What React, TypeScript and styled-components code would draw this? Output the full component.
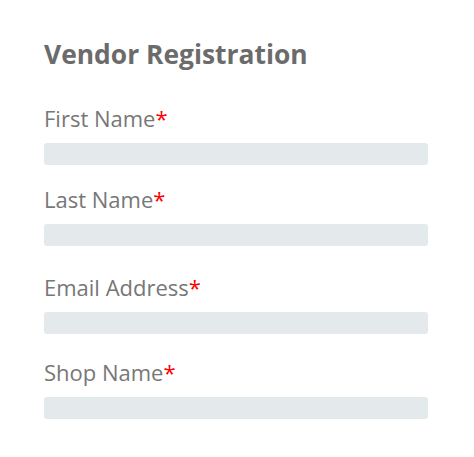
import React from "react";
import styled, { createGlobalStyle } from "styled-components";

const GlobalStyle = createGlobalStyle`
  html, body {
    margin: 0;
    padding: 0;
    background: #ffffff;
  }
  body {
    font-family: "Open Sans", "Liberation Sans", sans-serif;
  }
`;

const Form = styled.form`
  display: flex;
  flex-direction: column;
  width: 384px;
  padding: 39px 0 0 44px;
`;

const Title = styled.h2`
  margin: 0 0 34px;
  font-size: 26.4px;
  line-height: 31px;
  font-weight: 700;
  color: #6b6b6b;
`;

const Field = styled.div<{ $gap: number }>`
  display: flex;
  flex-direction: column;
  margin-top: ${(p) => p.$gap}px;
`;

const Label = styled.label`
  font-size: 22px;
  line-height: 28px;
  font-weight: 400;
  color: #777777;
  margin-bottom: 11px;
`;

const Required = styled.span`
  color: #ff0000;
`;

const Input = styled.input`
  height: 22px;
  box-sizing: border-box;
  border: none;
  border-radius: 3px;
  background: #e4e9ec;
  padding: 0 8px;
  outline: none;
`;

const fields = [
  { label: "First Name", gap: 0 },
  { label: "Last Name", gap: 20 },
  { label: "Email Address", gap: 27 },
  { label: "Shop Name", gap: 24 },
];

export default function App() {
  return (
    <>
      <GlobalStyle />
      <Form onSubmit={(e) => e.preventDefault()}>
        <Title>Vendor Registration</Title>
        {fields.map((f) => (
          <Field key={f.label} $gap={f.gap}>
            <Label>
              {f.label}
              <Required>*</Required>
            </Label>
            <Input type="text" />
          </Field>
        ))}
      </Form>
    </>
  );
}
